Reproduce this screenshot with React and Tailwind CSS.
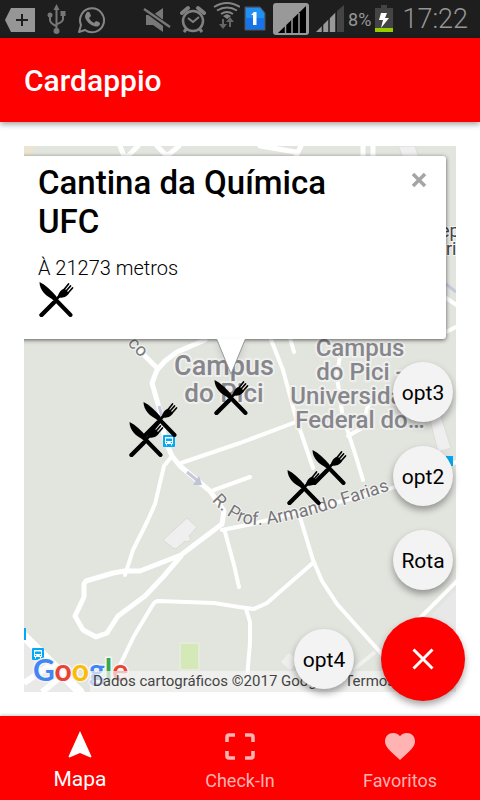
import React from "react";

const PINS = [
  { id: "a", place: "left-[189px] top-[233px]" },
  { id: "b", place: "left-[118px] top-[255px]" },
  { id: "c", place: "left-[104px] top-[275px]" },
  { id: "d", place: "left-[287px] top-[303px]" },
  { id: "e", place: "left-[262px] top-[323px]" },
];

function Cutlery() {
  return (
    <svg viewBox="0 0 36 36" className="block size-9" aria-hidden="true">
      <path d="M3.500 34 16 21.500" stroke="#000" strokeWidth="4.400" strokeLinecap="round" />
      <path d="M18.500 18 22 14.500" stroke="#000" strokeWidth="2.600" />
      <path d="M20 16.500c-.5-3.500 3-8 6.500-9L31 12c-1 3-6 5.500-9 4.500Z" fill="#000" />
      <path d="m26.500 8 4-5M28.500 9.500l4-4.500M30.500 11.500l4-4.500" stroke="#000" strokeWidth="1.700" strokeLinecap="round" />
      <path d="M1.500 1c6 3 11.500 8 17 14.500l-2.500 3.500C8 15.500 1.500 9 1.500 1Z" fill="#000" />
      <path d="M16 17 32.500 34" stroke="#000" strokeWidth="4" strokeLinecap="round" />
    </svg>
  );
}

function BusStop({ x, y }) {
  return (
    <g transform={`translate(${x} ${y})`}>
      <rect width="12" height="12" rx="1" fill="#03a9f4" />
      <path d="M2 2h8v7H9v1.500H8V9H4v1.500H3V9H2Z" fill="#fff" />
      <path d="M3 3.500h6v2.500H3Z" fill="#03a9f4" />
      <path d="M3 7h1.200v1H3ZM7.800 7H9v1H7.800Z" fill="#03a9f4" />
    </g>
  );
}

function MapCanvas() {
  return (
    <svg
      viewBox="24 146 432 546"
      preserveAspectRatio="xMinYMin slice"
      className="absolute inset-0 size-full font-[Roboto,sans-serif]"
      role="img"
      aria-label="Mapa do Campus do Pici"
    >
      <rect x="0" y="100" width="1200" height="1200" fill="#e2e4de" />
      <path d="M24 146h12l-8 14h-4Z" fill="#ebe4d0" />
      <path d="M398 146h17l8 25h-14ZM428 412l11-2 12 38-13 4Z" fill="#efefef" stroke="#dcddda" />
      <path d="M24 638 78 692H24Z" fill="#e9e9e7" />
      <path d="M24 683 52 664M42 692l16-13" stroke="#fff" strokeWidth="6" fill="none" />
      <path d="M456 589 400 648v44h56Z" fill="#e8e8e8" />
      <path d="m187 518 10 9-8 9 2 3-3 3-3-1-9 8-3-1-10-8Z" fill="#efefef" stroke="#dadbd7" />
      <path d="m289 653-8 9 9 8 9-9Z" fill="#efefed" />
      <path d="M180 643h19v27h-19Z" fill="#d5e8b8" stroke="#e6eadc" strokeWidth="2" />
      <g stroke="#fff" strokeWidth="5" fill="none" strokeLinejoin="round" strokeLinecap="round">
        <path d="m120 146 4 10M138 146l-10 10M157 146l10 10 12-10M260 146l36 6M301 146l-6 12M363 146v10M373 146v10" />
        <path d="m139 350 18 18M205 340l-28 12-12 9-8 9-5 13 8 28 5 29 7 16 8 10 30 25 14 20-2 13-41 31-41 16h-15l-12 2-27 8-2 3v13l-9 19 8 14 13 7 11-4 11-17 27-20 18-19 18-21" />
        <path d="m172 456-8 10-9 38-7 16-15 30-8 25M181 463l59-20 56-21 20-5M214 490l36-13" strokeWidth="4" />
        <path d="m270 337 13 33 13 48 17 50M290 338l4 14M340 355l-3 22 5 35 6 20 9 28 6 20M372 397l-5 12-5 19-14 8" strokeWidth="4" />
        <path d="m222 530 30-6 48-12 92-24 36-14 28-12M225 532l9 33 5 22M110 680l10-15 14-29 18-30q3-5 6-5l56 2 25 4 15 2 13-6 47-41M246 609l4 13v21l-3 35M299 514l14 46 9 21 15 23 43 48 20 23" strokeWidth="4" />
        <path d="m24 636 56 56" strokeWidth="9" />
        <path d="m458 580-40 40M446 332l12-6M446 298l12 8" strokeWidth="4" />
      </g>
      <path d="m353 670 22-18" stroke="#f1f1f0" strokeWidth="4" />
      <path d="m159 406 4 14M187 472l11 9M446 284l10 8" stroke="#c5c9dc" strokeWidth="3" fill="none" />
      <path d="m193 485 9 0-3-9Z" fill="#bfc3d6" />
      <BusStop x={163} y={435} />
      <BusStop x={32} y={648} />
      <path d="M24 628h2v12h-2ZM446 456h7v10h-7Z" fill="#03a9f4" />
      <g fill="#86868c" stroke="#eff0ed" strokeWidth="4" paintOrder="stroke" strokeLinejoin="round" textAnchor="middle" fontWeight="500">
        <text>
          <tspan x="224" y="375" fontSize="27">Campus</tspan>
          <tspan x="224" y="402" fontSize="26">do Pici</tspan>
        </text>
        <text fontSize="24">
          <tspan x="360" y="356">Campus</tspan>
          <tspan x="360" y="380">do Pici -</tspan>
          <tspan x="360" y="404">Universidade</tspan>
          <tspan x="360" y="428">Federal do…</tspan>
        </text>
      </g>
      <path id="street" d="M211 500C226 517 240 526 262 525C292 522 340 507 412 483" fill="none" />
      <g fill="#77777a" stroke="#f4f4f2" strokeWidth="2" paintOrder="stroke" strokeLinejoin="round" fontSize="18">
        <text>
          <textPath href="#street" startOffset="1">R. Prof. Armando Farias</textPath>
        </text>
        <text transform="translate(127 344) rotate(45)">co</text>
        <text fill="#444">
          <tspan x="440" y="237">ep</tspan>
          <tspan x="446" y="255">ri</tspan>
        </text>
      </g>
      <text x="33" y="681" fontSize="30" fontFamily="Lato, sans-serif" fontWeight="700" stroke="#f4f4f2" strokeWidth="3" paintOrder="stroke">
        <tspan fill="#4285f4">G</tspan><tspan fill="#ea4335">o</tspan><tspan fill="#fbbc05">o</tspan><tspan fill="#4285f4">g</tspan><tspan fill="#34a853">l</tspan><tspan fill="#ea4335">e</tspan>
      </text>
    </svg>
  );
}

function StatusBar() {
  return (
    <div className="flex h-[38px] shrink-0 items-center justify-between bg-[#1e1e1e] pr-3 pl-[5px] text-[#969696]">
      <div className="flex gap-3">
        <svg viewBox="5 0 30 38" className="h-[38px] w-[30px]" fill="none">
          <path d="M11 8h24v24H11L5 20Z" fill="#969696" />
          <path d="M16 20h12M22 14v12" stroke="#1e1e1e" strokeWidth="2" />
        </svg>
        <svg viewBox="47 0 19 38" className="h-[38px] w-[19px]" fill="none" stroke="#777" strokeWidth="2">
          <path d="M56.500 8v23M50 16v4q0 3 6 6M63 14v5q0 3-6 5" />
          <path d="m56.500 4 3 6h-6Z" fill="#777" stroke="none" />
          <circle cx="50" cy="15" r="2.500" fill="#777" stroke="none" />
          <path d="M60.500 11h5v5h-5Z" fill="#777" stroke="none" />
          <circle cx="56.500" cy="31" r="3" fill="#777" stroke="none" />
        </svg>
        <svg viewBox="79 0 27 38" className="h-[38px] w-[27px]" fill="none">
          <path d="m80 32 2-7a12 12 0 1 1 4 5Z" stroke="#858585" strokeWidth="2" strokeLinejoin="round" />
          <path d="M88 12c2-1 3 0 4 4l-2 2c1 2 3 4 5 5l2-2c4 1 4 2 4 3-1 3-4 3-6 2-4-1-8-5-9-9 0-2 1-4 2-5Z" fill="#858585" />
        </svg>
      </div>
      <div className="flex items-center gap-1">
        <svg viewBox="142 0 33 38" className="h-[38px] w-[33px]" fill="none">
          <path d="M145 15h7l10-7v24l-10-7h-7Z" fill="#777" />
          <path d="m142 8 27 20" stroke="#1e1e1e" strokeWidth="5" />
          <path d="m143 9 26 18" stroke="#777" strokeWidth="2.500" />
        </svg>
        <svg viewBox="179 0 29 38" className="h-[38px] w-[29px]" fill="none" stroke="#808080">
          <circle cx="192" cy="21" r="10" strokeWidth="2.500" />
          <path d="m187 18 5 4 6-5" strokeWidth="2" />
          <path d="m181 13 6-5M203 13l-6-5" strokeWidth="4" strokeLinecap="round" />
          <path d="m186 28-3 4M198 28l3 4" strokeWidth="3" />
        </svg>
        <svg viewBox="214 0 27 38" className="h-[38px] w-[27px]" fill="none" stroke="#858585" strokeWidth="2">
          <path d="M215 7q13-8 26 0M218 10.500q10-6 20 0M222 14q6-4 12 0" />
          <path d="m224 16 4-2 4 2-4 3Z" fill="#858585" stroke="none" />
          <path d="M225 19v5h3l-4 5-4-5h3v-5ZM232 27v-5h3l-4-5-4 5h3v5Z" fill="#666" stroke="none" />
        </svg>
        <svg viewBox="244 0 24 38" className="h-[38px] w-6">
          <path d="M245 7h15l5 6v17h-20Z" fill="#1673e8" stroke="#555" />
          <path d="M246 8h14l4 5v5h-18Z" fill="#2290ee" />
          <path d="m251 15 3-3h2.500v13H253V15Z" fill="#fff" />
        </svg>
        <svg viewBox="272 0 39 38" className="h-[38px] w-[39px]">
          <rect x="273" y="3" width="36" height="32" rx="3" fill="#999" />
          <path d="m278 33 28-27v27Z" fill="#000" />
          <path d="M285.500 25v8M292 19v14M299 13v20" stroke="#999" strokeWidth="1.500" />
        </svg>
        <svg viewBox="316 0 29 38" className="h-[38px] w-[29px]">
          <path d="m317 32 20-20v20Z" fill="#999" />
          <path d="m338 11 7-6v27h-7Z" fill="#444" />
          <path d="M323.500 24v8M330 18v14M337 10v22" stroke="#1e1e1e" strokeWidth="1.500" />
        </svg>
        <span className="pt-[2px] text-lg">8%</span>
        <svg viewBox="375 0 23 38" className="h-[38px] w-[23px]">
          <path d="M375 8h6V5h6v3h6v20h-18Z" fill="#444" />
          <path d="M375 28h18v4h-18Z" fill="#9c0" />
          <path d="m381 13 6 0-2 5h4l-8 10 2-8h-4Z" fill="#fff" />
        </svg>
        <span className="text-[27px] font-light">17:22</span>
      </div>
    </div>
  );
}

function InfoWindow() {
  return (
    <section className="absolute top-[10px] right-[10px] -left-2 rounded-[3px] bg-white px-[22px] pt-[7px] pb-[22px] shadow-[0_1px_4px_rgba(0,0,0,0.6)]">
      <h2 className="mr-20 text-[33px] leading-[39px] font-medium">Cantina da Química UFC</h2>
      <p className="mt-[15px] text-[20px] leading-6 font-light">À 21273 metros</p>
      <div className="pt-px">
        <Cutlery />
      </div>
      <button type="button" aria-label="Fechar" className="absolute top-4 right-[19px] size-4">
        <svg viewBox="0 0 16 16" className="size-4">
          <path d="m2 2 12 12M14 2 2 14" stroke="#a5a5a5" strokeWidth="3.500" />
        </svg>
      </button>
      <svg viewBox="0 0 30 38" className="absolute top-full left-1/2 h-[38px] w-[30px] -translate-x-1/2 drop-shadow-md" aria-hidden="true">
        <path d="M1 0h28L15 35Z" fill="#fff" />
        <path d="m1 1 14 34L29 1" fill="none" stroke="#999" strokeWidth="1" />
      </svg>
    </section>
  );
}

function MiniFab({ children }) {
  return (
    <button type="button" className="size-[60px] rounded-full bg-[#f3f3f3] pt-[3px] text-[21px] shadow-[0_4px_7px_rgba(0,0,0,0.35)]">
      {children}
    </button>
  );
}

function Tab({ label, active, children }) {
  return (
    <button
      type="button"
      aria-current={active ? "page" : undefined}
      className={
        active
          ? "flex flex-1 flex-col items-center gap-[9px] pt-[14px] text-[21px] leading-6 text-white"
          : "flex flex-1 flex-col items-center gap-[9px] pt-4 text-lg leading-6 text-[#ffb3b3]"
      }
    >
      {children}
      <span>{label}</span>
    </button>
  );
}

export default function App() {
  return (
    <div className="flex min-h-screen flex-col bg-white font-[Roboto,sans-serif] text-black">
      <StatusBar />
      <header className="z-10 flex h-21 shrink-0 items-center bg-[#ff0000] px-6 pt-[2px] shadow-[0_2px_6px_rgba(0,0,0,0.4)]">
        <h1 className="text-3xl font-medium text-white">Cardappio</h1>
      </header>
      <main className="relative flex flex-1 flex-col p-6">
        <div className="relative min-h-[400px] flex-1 overflow-hidden">
          <MapCanvas />
          {PINS.map((pin) => (
            <button key={pin.id} type="button" aria-label="Restaurante" className={`absolute ${pin.place}`}>
              <Cutlery />
            </button>
          ))}
          <InfoWindow />
          <div className="absolute right-0 bottom-0 left-[66px] flex h-[21px] items-center gap-4 overflow-hidden bg-[#f5f5f5]/70 pl-[3px] text-[15px] whitespace-nowrap text-[#444]">
            <span>Dados cartográficos ©2017 Google</span>
            <a href="#termos">Termos de Uso</a>
          </div>
        </div>
        <div className="absolute right-[15px] bottom-[15px] flex items-end gap-[27px]">
          <div className="pb-3">
            <MiniFab>opt4</MiniFab>
          </div>
          <div className="flex flex-col items-center gap-[27px]">
            <div className="flex flex-col gap-6">
              <MiniFab>opt3</MiniFab>
              <MiniFab>opt2</MiniFab>
              <MiniFab>Rota</MiniFab>
            </div>
            <button type="button" aria-label="Fechar opções" className="flex size-21 items-center justify-center rounded-full bg-[#ff0000] shadow-[0_4px_7px_rgba(0,0,0,0.35)]">
              <svg viewBox="0 0 22 22" className="size-[22px]">
                <path d="m1.500 1.500 19 19M20.500 1.500l-19 19" stroke="#fff" strokeWidth="3" />
              </svg>
            </button>
          </div>
        </div>
      </main>
      <nav className="flex h-21 shrink-0 bg-[#ff0000] shadow-[0_-1px_3px_rgba(0,0,0,0.2)]">
        <Tab label="Mapa" active>
          <svg viewBox="0 0 24 28" className="h-7 w-6 shrink-0" fill="currentColor">
            <path d="M12 1 23.500 26.500 22.500 27.500 12 23 1.500 27.500.5 26.500Z" />
          </svg>
        </Tab>
        <Tab label="Check-In">
          <svg viewBox="0 0 30 28" className="h-7 w-[30px] shrink-0" fill="none" stroke="currentColor" strokeWidth="3.600">
            <path d="M2 10V5q0-2 2-2h6M20 3h6q2 0 2 2v5M28 19v5q0 2-2 2h-6M10 26H4q-2 0-2-2v-5" />
          </svg>
        </Tab>
        <Tab label="Favoritos">
          <svg viewBox="0 0 30 28" className="h-7 w-[30px] shrink-0" fill="currentColor">
            <path d="M15 28 11.800 25C4.500 18.400 0 14.500 0 9.200 0 4.500 3.500 1 8.200 1c2.700 0 5.100 1.200 6.800 3.200C16.700 2.200 19.100 1 21.800 1 26.500 1 30 4.500 30 9.200c0 5.300-4.500 9.200-11.800 15.800Z" />
          </svg>
        </Tab>
      </nav>
    </div>
  );
}
